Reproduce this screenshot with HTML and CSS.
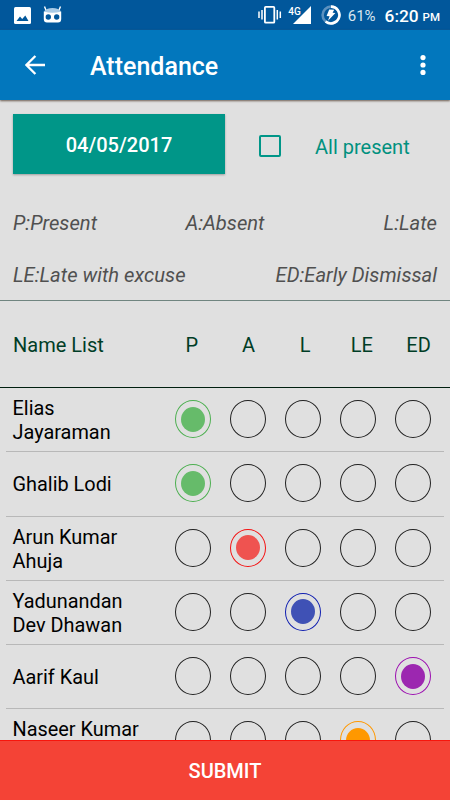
FILE: index.html
```html
<!DOCTYPE html>
<html lang="en">
<head>
    <meta charset="UTF-8">
    <meta name="viewport" content="width=device-width, initial-scale=1.0">
    <title>Attendance</title>
    <link rel="stylesheet" href="styles.css">
</head>
<body>
    <div class="status-bar">
        <svg class="icon-picture" width="17" height="17" viewBox="0 0 17 17">
            <rect width="17" height="17" rx="1.5" fill="#fff"/>
            <path d="M2.5 14 L6 9.5 L8.2 12 L11.3 8.5 L14.5 14 Z" fill="#01579b"/>
        </svg>
        <svg class="icon-robot" width="19" height="17" viewBox="0 0 19 17">
            <path d="M1.5 0.5 L3.3 5 M17.5 0.5 L15.7 5" stroke="#fff" stroke-width="1.4"/>
            <path d="M1 7 Q1 4 4 3 Q9.5 0.8 15 3 Q18 4 18 7 Z" fill="#a9cbe6"/>
            <path d="M0.8 5.5 Q9.5 8 18.2 5.5 V13 Q18.2 16.5 15 16.5 H4 Q0.8 16.5 0.8 13 Z" fill="#fff"/>
            <circle cx="5.3" cy="11" r="2.7" fill="#01579b"/>
            <circle cx="13.7" cy="11" r="2.7" fill="#01579b"/>
        </svg>
        <div class="status-right">
            <svg class="icon-vibrate" width="24" height="18" viewBox="0 0 24 18">
                <rect x="6.9" y="0.9" width="9.4" height="15.8" rx="0.8" fill="none" stroke="#fff" stroke-width="1.8"/>
                <path d="M1 5.5 V12 M4 4 V13.5 M19.3 4 V13.5 M22.3 5.5 V12" stroke="#fff" stroke-width="1.5"/>
            </svg>
            <span class="network">4G</span>
            <svg class="icon-signal" width="18" height="18" viewBox="0 0 18 18">
                <path d="M18 0 V18 H0 Z" fill="#fff"/>
            </svg>
            <svg class="icon-battery" width="20" height="20" viewBox="0 0 20 20">
                <circle cx="10" cy="10" r="8.4" fill="none" stroke="#5c91bf" stroke-width="2.6"/>
                <path d="M10 1.6 A8.4 8.4 0 1 1 4.6 16.4" fill="none" stroke="#fff" stroke-width="2.6"/>
                <path d="M8.2 4.6 L13.2 4.8 L11.6 7.8 L14.4 8 L7 15.8 L8.6 11.2 L5.6 11 Z" fill="#fff"/>
            </svg>
            <span class="percent">61%</span>
            <span class="clock">6:20</span>
            <span class="pm">PM</span>
        </div>
    </div>
    <header class="toolbar">
        <svg width="20" height="20" viewBox="0 0 20 20">
            <path d="M20 10 H2 M10.4 1 L1.4 10 L10.4 19" fill="none" stroke="#fff" stroke-width="2.4"/>
        </svg>
        <h1>Attendance</h1>
        <svg class="menu" width="6" height="20" viewBox="0 0 6 20">
            <circle cx="3" cy="2.6" r="2.6" fill="#fff"/>
            <circle cx="3" cy="10" r="2.6" fill="#fff"/>
            <circle cx="3" cy="17.4" r="2.6" fill="#fff"/>
        </svg>
    </header>
    <div class="controls">
        <button class="date">04/05/2017</button>
        <label class="all">
            <input type="checkbox">
            <span>All present</span>
        </label>
    </div>
    <div class="legend">
        <div class="legend-row three">
            <span>P:Present</span>
            <span>A:Absent</span>
            <span>L:Late</span>
        </div>
        <div class="legend-row">
            <span>LE:Late with excuse</span>
            <span>ED:Early Dismissal</span>
        </div>
    </div>
    <div class="list-head">
        <span class="title">Name List</span>
        <span>P</span>
        <span>A</span>
        <span>L</span>
        <span>LE</span>
        <span>ED</span>
    </div>
    <div class="list">
        <div class="row">
            <p>Elias<br>Jayaraman</p>
            <input type="radio" name="s1" class="p" checked>
            <input type="radio" name="s1" class="a">
            <input type="radio" name="s1" class="l">
            <input type="radio" name="s1" class="le">
            <input type="radio" name="s1" class="ed">
        </div>
        <div class="row">
            <p>Ghalib Lodi</p>
            <input type="radio" name="s2" class="p" checked>
            <input type="radio" name="s2" class="a">
            <input type="radio" name="s2" class="l">
            <input type="radio" name="s2" class="le">
            <input type="radio" name="s2" class="ed">
        </div>
        <div class="row">
            <p>Arun Kumar<br>Ahuja</p>
            <input type="radio" name="s3" class="p">
            <input type="radio" name="s3" class="a" checked>
            <input type="radio" name="s3" class="l">
            <input type="radio" name="s3" class="le">
            <input type="radio" name="s3" class="ed">
        </div>
        <div class="row">
            <p>Yadunandan<br>Dev Dhawan</p>
            <input type="radio" name="s4" class="p">
            <input type="radio" name="s4" class="a">
            <input type="radio" name="s4" class="l" checked>
            <input type="radio" name="s4" class="le">
            <input type="radio" name="s4" class="ed">
        </div>
        <div class="row">
            <p>Aarif Kaul</p>
            <input type="radio" name="s5" class="p">
            <input type="radio" name="s5" class="a">
            <input type="radio" name="s5" class="l">
            <input type="radio" name="s5" class="le">
            <input type="radio" name="s5" class="ed" checked>
        </div>
        <div class="row">
            <p>Naseer Kumar<br>&nbsp;</p>
            <input type="radio" name="s6" class="p">
            <input type="radio" name="s6" class="a">
            <input type="radio" name="s6" class="l">
            <input type="radio" name="s6" class="le" checked>
            <input type="radio" name="s6" class="ed">
        </div>
    </div>
    <button class="submit">SUBMIT</button>
</body>
</html>
```
FILE: styles.css
```css
* {
    margin: 0;
    padding: 0;
    box-sizing: border-box;
}
body {
    display: flex;
    flex-direction: column;
    height: 100vh;
    overflow: hidden;
    font-family: Roboto, sans-serif;
    font-size: 20px;
    background-color: #e0e0e0;
}
svg {
    display: block;
    flex-shrink: 0;
}
button {
    border: none;
    font-family: inherit;
    font-size: 20px;
    font-weight: 500;
    color: #fff;
    cursor: pointer;
}
.status-bar {
    display: flex;
    align-items: center;
    flex-shrink: 0;
    height: 30px;
    padding: 0 10px 0 14px;
    background-color: #01579b;
    color: #fff;
}
.icon-robot {
    margin-left: 12px;
    margin-top: -2px;
}
.status-right {
    display: flex;
    align-items: center;
    margin-left: auto;
}
.network {
    align-self: flex-start;
    margin-left: 6px;
    font-size: 10px;
    font-weight: 500;
    line-height: 13px;
}
.icon-signal {
    margin-left: -8px;
}
.icon-battery {
    margin-left: 10px;
}
.percent {
    margin-left: 7px;
    margin-top: 1px;
    font-size: 15px;
    color: #d9e6f0;
}
.clock {
    margin-left: 9px;
    margin-top: 1px;
    font-size: 17.3px;
    font-weight: 500;
}
.pm {
    margin-left: 4px;
    margin-top: 4px;
    font-size: 11.5px;
    font-weight: 500;
}
.toolbar {
    display: flex;
    align-items: center;
    flex-shrink: 0;
    height: 70px;
    padding: 0 24px 0 25px;
    background-color: #0277bd;
    box-shadow: 0 1px 2px #6b5c50;
}
.toolbar h1 {
    margin-left: 45px;
    margin-top: 2px;
    font-size: 25px;
    font-weight: 500;
    color: #fff;
}
.menu {
    margin-left: auto;
}
.controls {
    display: flex;
    flex-shrink: 0;
    height: 97px;
    padding: 14px 13px 0;
}
.date {
    width: 212px;
    height: 60px;
    padding-top: 1px;
    background-color: #009688;
    box-shadow: 0 1px 2px rgba(0, 0, 0, .3);
}
.all {
    display: flex;
    align-items: center;
    height: 64px;
    margin-left: 34px;
    color: #00917f;
}
.all input {
    appearance: none;
    width: 22px;
    height: 22px;
    border: 2px solid #009688;
    border-radius: 2px;
}
.all span {
    margin-left: 34px;
    margin-top: 2px;
}
.legend {
    flex-shrink: 0;
    height: 104px;
    padding: 0 13px;
    border-bottom: 1px solid #708580;
    font-size: 20.2px;
    font-style: italic;
    color: #505050;
}
.legend-row {
    display: flex;
    justify-content: space-between;
    line-height: 52px;
}
.three span {
    flex: 1;
    text-align: center;
}
.three span:first-child {
    text-align: left;
}
.three span:last-child {
    text-align: right;
}
.list-head {
    display: flex;
    align-items: center;
    flex-shrink: 0;
    height: 87px;
    padding-top: 2px;
    padding-left: 13px;
    border-bottom: 1px solid #00200f;
    color: #003d26;
}
.list-head span {
    width: 56.7px;
    text-align: center;
}
.list-head .title {
    width: 150.5px;
    text-align: left;
}
.list {
    flex: 1;
    min-height: 0;
    overflow: hidden;
}
.row {
    display: flex;
    align-items: center;
    height: 64.25px;
    margin: 0 6px;
    padding-left: 6.5px;
    padding-bottom: 1px;
    border-bottom: 1px solid #b8b8b8;
}
.row p {
    flex-shrink: 0;
    width: 162.8px;
    padding-top: 4px;
    font-size: 19.9px;
    line-height: 24px;
    color: #000;
}
.row input {
    appearance: none;
    display: flex;
    align-items: center;
    justify-content: center;
    width: 36px;
    height: 38px;
    margin-right: 19px;
    flex-shrink: 0;
    border: 1px solid #222;
    border-radius: 50%;
}
.row input:checked::before {
    content: "";
    width: 24px;
    height: 25px;
    border-radius: 50%;
    background-color: currentColor;
}
.row .p:checked {
    border-color: #4caf50;
    color: #66bb6a;
}
.row .a:checked {
    border-color: #f41212;
    color: #ef5350;
}
.row .l:checked {
    border-color: #101fb0;
    color: #3f51b5;
}
.row .le:checked {
    border-color: #ff9800;
    color: #ff9800;
}
.row .ed:checked {
    border-color: #9c0fb0;
    color: #9c27b0;
}
.submit {
    flex-shrink: 0;
    height: 60px;
    background-color: #f44336;
    border-top: 1px solid #f8150c;
}
```
